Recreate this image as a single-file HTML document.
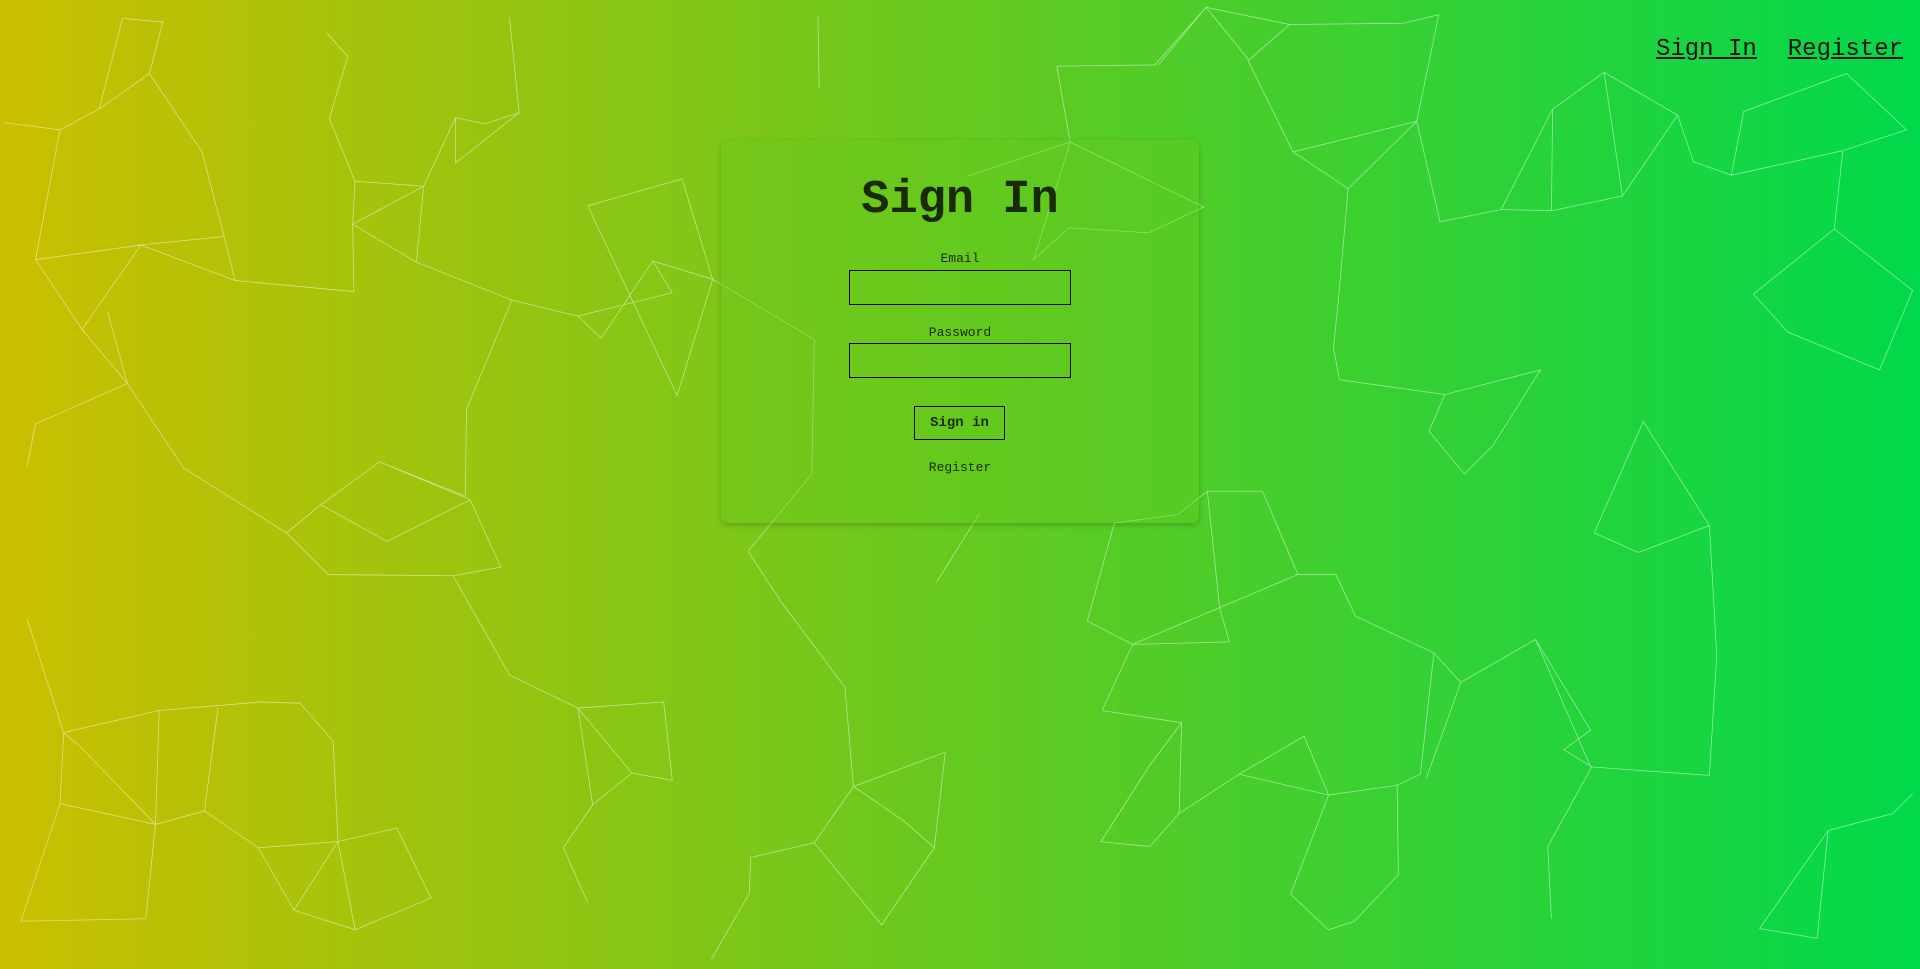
<!DOCTYPE html>
<html><head><meta charset="utf-8"><style>
html,body{margin:0;padding:0;width:1920px;height:969px;overflow:hidden}
body{background:linear-gradient(90deg,#cbbf00 0%,#66c91f 50%,#00d94b 100%);font-family:"Liberation Mono","Courier New",monospace;position:relative}
svg.bg{position:absolute;left:0;top:0;width:1920px;height:969px}
.nav{position:absolute;top:36px;right:17px;font-size:24px}
.nav a{color:#111;text-decoration:underline;margin-left:31px}
.card{position:absolute;left:721px;top:140px;width:478px;height:383px;border-radius:7px;background:rgba(100,200,30,0.35);box-shadow:0 2px 6px rgba(0,0,0,0.2);text-align:center}
h1{margin:0;position:absolute;left:0;width:100%;font-size:47px;font-weight:bold;color:#1b2a06;line-height:1}
.lbl{position:absolute;left:0;width:100%;font-size:13px;color:#1b2a06}
.inp{position:absolute;left:128px;width:220px;height:33px;border:1px solid #000;box-sizing:content-box}
.btn{position:absolute;left:193px;top:266px;width:89px;height:32px;border:1px solid #000;font-size:14px;font-weight:bold;line-height:32px;color:#1b2a06}
</style></head><body>
<svg class="bg" viewBox="0 0 1568 791" preserveAspectRatio="none" fill="none" stroke="rgba(255,255,255,0.5)" stroke-width="0.8" vector-effect="non-scaling-stroke">
<path vector-effect="non-scaling-stroke" d="M3 100L49 106L81 89L100 15L133 18L122 60L81 89M49 106L29 212L67 269L104 313L29 346L22 381M29 212L115 200L183 193L192 229L115 200L67 269M165 124L122 60M165 124L183 193M104 313L150 382L234 435M88 255L104 313M267 27L284 46L269 97L290 148L346 152L372 96L396 101L424 92L416 14M269 97L290 148L288 183L340 214L346 152L288 183L289 238L192 229M372 96L372 133L424 92M340 214L418 245L472 258L491 276L533 213L582 228L553 323L480 168L557 146L582 228M472 258L549 239L533 213M418 245L381 334L380 405L310 377L262 412L234 435L268 469L370 470L409 463L384 408L310 377M316 442L262 412M316 442L384 408M370 470L416 551L472 578L542 573L549 637L516 631L484 657L460 692L480 737M472 578L484 657M516 631L472 578M22 505L52 598L49 656L127 673L167 662L211 692L240 743L290 759L352 733L324 676L276 687L272 605L245 574L213 573L130 580L52 598L66 610L127 673M167 662L178 578M130 580L127 673L119 750L17 752L49 656M211 692L276 687L290 759M240 743L276 687L324 676M613 700L665 688L697 642L738 670L763 692L772 614L697 642M613 700L612 729L581 783M665 688L720 755L763 692M697 642L690 561L637 490L611 450L663 387L665 277L582 228M800 419L765 475M668 13L669 72M863 54L874 116L844 212L873 186L938 190L983 169L874 116L790 144M863 54L943 53L985 6L1053 20L1020 49L985 6L946 53M1053 20L1146 19L1175 12L1157 99L1056 124L1019 49M1157 99L1101 154L1056 124M1101 154L1093 245L1089 284L1094 310L1180 322L1258 302L1219 364L1196 387L1167 352L1180 322M1157 99L1176 181L1226 171L1267 172L1268 89L1310 59L1370 94L1383 132L1414 143L1424 91L1508 60L1557 106L1505 123L1498 187L1432 240L1460 271L1535 302L1562 237L1498 187M1267 172L1325 160L1370 94M1310 59L1325 160M1268 89L1226 171M1414 143L1505 123M1342 344L1302 435L1338 451L1396 429L1342 344M910 427L888 507L925 526L996 496L1060 469L1091 469L1107 503L1171 533L1193 557L1254 522L1299 626L1396 633L1402 535L1396 429M925 526L1004 524L996 496L986 401L1031 401L1060 469M910 427L962 420L986 401M900 580L965 590L938 626L919 656L899 687L939 691L963 664L1012 632L1065 601L1085 649L1141 641L1160 632L1171 533M1141 641L1142 714L1106 752L1085 759L1054 730L1085 649M1065 601L1012 632L1085 649M1254 522L1299 596L1277 612L1300 626L1264 691L1267 750M1493 678L1546 664L1562 648M1493 678L1437 758L1484 766L1493 678M1193 557L1165 635M900 580L925 526M963 664L965 590"/>
</svg>
<div class="nav"><a>Sign In</a><a>Register</a></div>
<div class="card">
<h1 style="top:37px">Sign In</h1>
<div class="lbl" style="top:111px">Email</div>
<div class="inp" style="top:130px"></div>
<div class="lbl" style="top:185px">Password</div>
<div class="inp" style="top:203px"></div>
<div class="btn">Sign in</div>
<div class="lbl" style="top:320px">Register</div>
</div>
</body></html>
